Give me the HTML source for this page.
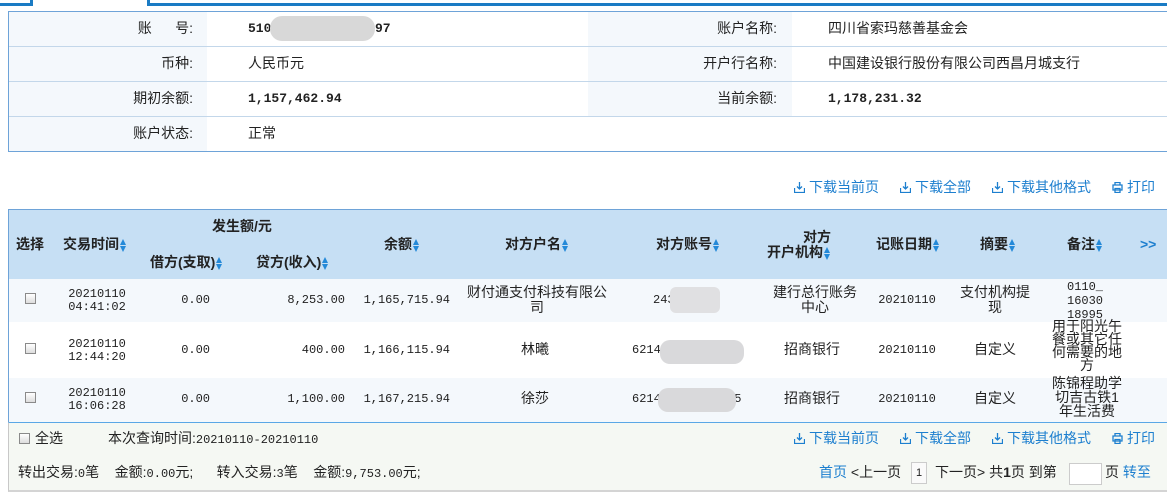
<!DOCTYPE html>
<html><head><meta charset="utf-8"><style>
*{margin:0;padding:0;box-sizing:border-box}
body{width:1167px;height:493px;overflow:hidden;background:#fff;font-family:"Liberation Sans","Noto Sans CJK SC",sans-serif;font-size:14px;line-height:1.15;color:#222;position:relative}
.a{position:absolute;white-space:nowrap}
.m{font-family:"Liberation Mono","Noto Sans CJK SC",monospace;font-size:12px}
.mb{font-family:"Liberation Mono",monospace;font-size:13px;font-weight:bold}
.b{font-weight:bold}
.lnk{color:#1d7fcf}
.s{display:inline-block;width:7px;height:13px;vertical-align:middle;position:relative;margin-left:1px}
.s:before{content:"";position:absolute;left:0;top:0;border-left:3.5px solid transparent;border-right:3.5px solid transparent;border-bottom:6px solid #2489d8}
.s:after{content:"";position:absolute;left:0;bottom:0;border-left:3.5px solid transparent;border-right:3.5px solid transparent;border-top:6px solid #2489d8}
.cb{position:absolute;width:11px;height:11px;border:1px solid #8a8a8a;background:linear-gradient(#fff,#ddd)}
.c{text-align:center;transform:translateX(-50%)}
.r{text-align:right;transform:translateX(-100%)}
.h{font-weight:bold;font-size:14px}
.ic{display:inline-block;width:11px;height:11px;vertical-align:-1px;margin-right:4px}
</style></head><body>
<div class="a" style="left:0;top:3px;width:33px;height:3px;background:#1a7bc4"></div>
<div class="a" style="left:30px;top:0;width:3px;height:6px;background:#1a7bc4"></div>
<div class="a" style="left:147px;top:0;width:3px;height:6px;background:#1a7bc4"></div>
<div class="a" style="left:147px;top:3px;width:1020px;height:3px;background:#1a7bc4"></div>
<div class="a" style="left:8px;top:11px;width:1170px;height:141px;border:1px solid #6ea3d8;background:#fff"></div>
<div class="a" style="left:9px;top:12px;width:198px;height:139px;background:#f4f8fc"></div>
<div class="a" style="left:588px;top:12px;width:204px;height:105px;background:#f4f8fc"></div>
<div class="a" style="left:9px;top:46px;width:1160px;height:1px;background:#c3d7ea"></div>
<div class="a" style="left:9px;top:81px;width:1160px;height:1px;background:#c3d7ea"></div>
<div class="a" style="left:9px;top:116px;width:1160px;height:1px;background:#c3d7ea"></div>
<div class="a r" style="left:193px;top:20px">账&nbsp;&nbsp;&nbsp;&nbsp;&nbsp;&nbsp;号:</div>
<div class="a mb" style="left:248px;top:22px">5100</div>
<div class="a" style="left:270px;top:16px;width:105px;height:25px;border-radius:12px;background:#d8d8d8"></div>
<div class="a mb" style="left:375px;top:22px">97</div>
<div class="a r" style="left:193px;top:55px">币种:</div>
<div class="a" style="left:248px;top:55px">人民币元</div>
<div class="a r" style="left:193px;top:90px">期初余额:</div>
<div class="a mb" style="left:248px;top:92px">1,157,462.94</div>
<div class="a r" style="left:193px;top:125px">账户状态:</div>
<div class="a" style="left:248px;top:125px">正常</div>
<div class="a r" style="left:777px;top:20px">账户名称:</div>
<div class="a" style="left:828px;top:20px">四川省索玛慈善基金会</div>
<div class="a r" style="left:777px;top:55px">开户行名称:</div>
<div class="a" style="left:828px;top:55px">中国建设银行股份有限公司西昌月城支行</div>
<div class="a r" style="left:777px;top:90px">当前余额:</div>
<div class="a mb" style="left:828px;top:92px">1,178,231.32</div>
<div class="a lnk" style="left:794px;top:179px"><svg class="ic" viewBox="0 0 11 11"><path d="M5.5 0v7M3 4.5l2.5 2.5 2.5-2.5M0.5 6v4.5h10V6" fill="none" stroke="#1d7fcf" stroke-width="1.3"/></svg>下载当前页</div>
<div class="a lnk" style="left:900px;top:179px"><svg class="ic" viewBox="0 0 11 11"><path d="M5.5 0v7M3 4.5l2.5 2.5 2.5-2.5M0.5 6v4.5h10V6" fill="none" stroke="#1d7fcf" stroke-width="1.3"/></svg>下载全部</div>
<div class="a lnk" style="left:992px;top:179px"><svg class="ic" viewBox="0 0 11 11"><path d="M5.5 0v7M3 4.5l2.5 2.5 2.5-2.5M0.5 6v4.5h10V6" fill="none" stroke="#1d7fcf" stroke-width="1.3"/></svg>下载其他格式</div>
<div class="a lnk" style="left:1112px;top:179px"><svg class="ic" viewBox="0 0 11 11"><path d="M3 3V0.5h5V3M1 3h9v5H1zM3 6.5h5v4H3z" fill="none" stroke="#1d7fcf" stroke-width="1.3"/></svg>打印</div>
<div class="a" style="left:8px;top:209px;width:1170px;height:214px;border:1px solid #6ea3d8;border-right:none;border-bottom:none"></div>
<div class="a" style="left:9px;top:210px;width:1160px;height:69px;background:#c6dff4"></div>
<div class="a" style="left:9px;top:279px;width:1160px;height:43px;background:#f4f8fc"></div>
<div class="a" style="left:9px;top:378px;width:1160px;height:44px;background:#f4f8fc"></div>
<div class="a h" style="left:16px;top:236px">选择</div>
<div class="a h" style="left:63px;top:236px">交易时间<span class="s"></span></div>
<div class="a h" style="left:212px;top:218px">发生额/元</div>
<div class="a h" style="left:150px;top:254px">借方(支取)<span class="s"></span></div>
<div class="a h" style="left:256px;top:254px">贷方(收入)<span class="s"></span></div>
<div class="a h" style="left:384px;top:236px">余额<span class="s"></span></div>
<div class="a h" style="left:505px;top:236px">对方户名<span class="s"></span></div>
<div class="a h" style="left:656px;top:236px">对方账号<span class="s"></span></div>
<div class="a h" style="left:803px;top:229px">对方</div>
<div class="a h" style="left:767px;top:244px">开户机构<span class="s"></span></div>
<div class="a h" style="left:876px;top:236px">记账日期<span class="s"></span></div>
<div class="a h" style="left:980px;top:236px">摘要<span class="s"></span></div>
<div class="a h" style="left:1067px;top:236px">备注<span class="s"></span></div>
<div class="a" style="left:1140px;top:236px;color:#1d7fcf;font-weight:bold">&gt;&gt;</div>
<div class="cb" style="left:25px;top:293px"></div>
<div class="a m c" style="left:97px;top:288px;line-height:13px">20210110<br>04:41:02</div>
<div class="a m r" style="left:210px;top:294px">0.00</div>
<div class="a m r" style="left:345px;top:294px">8,253.00</div>
<div class="a m r" style="left:450px;top:294px">1,165,715.94</div>
<div class="a c" style="left:537px;top:285px;line-height:15px;text-align:center">财付通支付科技有限公<br>司</div>
<div class="a m" style="left:653px;top:294px">243</div>
<div class="a" style="left:670px;top:287px;width:50px;height:26px;background:#e0e0e2;border-radius:6px"></div>
<div class="a c" style="left:815px;top:285px;line-height:15px;text-align:center">建行总行账务<br>中心</div>
<div class="a m c" style="left:907px;top:294px">20210110</div>
<div class="a c" style="left:995px;top:285px;line-height:15px;text-align:center">支付机构提<br>现</div>
<div class="a m c" style="left:1085px;top:280px;line-height:14px;text-align:center">0110_<br>16030<br>18995</div>
<div class="cb" style="left:25px;top:343px"></div>
<div class="a m c" style="left:97px;top:338px;line-height:13px">20210110<br>12:44:20</div>
<div class="a m r" style="left:210px;top:344px">0.00</div>
<div class="a m r" style="left:345px;top:344px">400.00</div>
<div class="a m r" style="left:450px;top:344px">1,166,115.94</div>
<div class="a c" style="left:535px;top:341px">林曦</div>
<div class="a m" style="left:632px;top:344px">6214</div>
<div class="a" style="left:660px;top:340px;width:84px;height:24px;background:#d9d9db;border-radius:10px"></div>
<div class="a c" style="left:812px;top:341px">招商银行</div>
<div class="a m c" style="left:907px;top:344px">20210110</div>
<div class="a c" style="left:995px;top:341px">自定义</div>
<div class="a c" style="left:1087px;top:320px;line-height:13px;text-align:center">用于阳光午<br>餐或其它任<br>何需要的地<br>方</div>
<div class="cb" style="left:25px;top:392px"></div>
<div class="a m c" style="left:97px;top:387px;line-height:13px">20210110<br>16:06:28</div>
<div class="a m r" style="left:210px;top:393px">0.00</div>
<div class="a m r" style="left:345px;top:393px">1,100.00</div>
<div class="a m r" style="left:450px;top:393px">1,167,215.94</div>
<div class="a c" style="left:535px;top:390px">徐莎</div>
<div class="a m" style="left:632px;top:393px">6214</div>
<div class="a m" style="left:727px;top:393px">35</div>
<div class="a" style="left:658px;top:388px;width:78px;height:24px;background:#d9d9db;border-radius:10px"></div>
<div class="a c" style="left:812px;top:390px">招商银行</div>
<div class="a m c" style="left:907px;top:393px">20210110</div>
<div class="a c" style="left:995px;top:390px">自定义</div>
<div class="a c" style="left:1087px;top:376px;line-height:14px;text-align:center">陈锦程助学<br>切吉古铁1<br>年生活费</div>
<div class="a" style="left:8px;top:422px;width:1170px;height:70px;background:#f5f8f3;border-top:1px solid #5aa7e6;border-left:1px solid #c8c8c8;border-bottom:2px solid #d4d4d4"></div>
<div class="cb" style="left:19px;top:433px"></div>
<div class="a" style="left:35px;top:430px">全选</div>
<div class="a" style="left:108px;top:430px">本次查询时间:<span class="m">20210110-20210110</span></div>
<div class="a lnk" style="left:794px;top:430px"><svg class="ic" viewBox="0 0 11 11"><path d="M5.5 0v7M3 4.5l2.5 2.5 2.5-2.5M0.5 6v4.5h10V6" fill="none" stroke="#1d7fcf" stroke-width="1.3"/></svg>下载当前页</div>
<div class="a lnk" style="left:900px;top:430px"><svg class="ic" viewBox="0 0 11 11"><path d="M5.5 0v7M3 4.5l2.5 2.5 2.5-2.5M0.5 6v4.5h10V6" fill="none" stroke="#1d7fcf" stroke-width="1.3"/></svg>下载全部</div>
<div class="a lnk" style="left:992px;top:430px"><svg class="ic" viewBox="0 0 11 11"><path d="M5.5 0v7M3 4.5l2.5 2.5 2.5-2.5M0.5 6v4.5h10V6" fill="none" stroke="#1d7fcf" stroke-width="1.3"/></svg>下载其他格式</div>
<div class="a lnk" style="left:1112px;top:430px"><svg class="ic" viewBox="0 0 11 11"><path d="M3 3V0.5h5V3M1 3h9v5H1zM3 6.5h5v4H3z" fill="none" stroke="#1d7fcf" stroke-width="1.3"/></svg>打印</div>
<div class="a" style="left:18px;top:464px">转出交易:<span class="m">0</span>笔&nbsp;&nbsp;&nbsp;&nbsp;金额:<span class="m">0.00</span>元;&nbsp;&nbsp;&nbsp;&nbsp;&nbsp;&nbsp;转入交易:<span class="m">3</span>笔&nbsp;&nbsp;&nbsp;&nbsp;金额:<span class="m">9,753.00</span>元;</div>
<div class="a" style="left:819px;top:464px"><span class="lnk">首页</span>&nbsp;&lt;上一页</div>
<div class="a" style="left:911px;top:462px;width:16px;height:22px;border:1px solid #ccc;background:#fafafa;text-align:center;line-height:20px;font-size:11px">1</div>
<div class="a" style="left:935px;top:464px">下一页&gt; 共<b>1</b>页 到第</div>
<div class="a" style="left:1069px;top:463px;width:33px;height:22px;border:1px solid #ccc;background:#fff"></div>
<div class="a" style="left:1105px;top:464px">页 <span class="lnk">转至</span></div>
</body></html>
